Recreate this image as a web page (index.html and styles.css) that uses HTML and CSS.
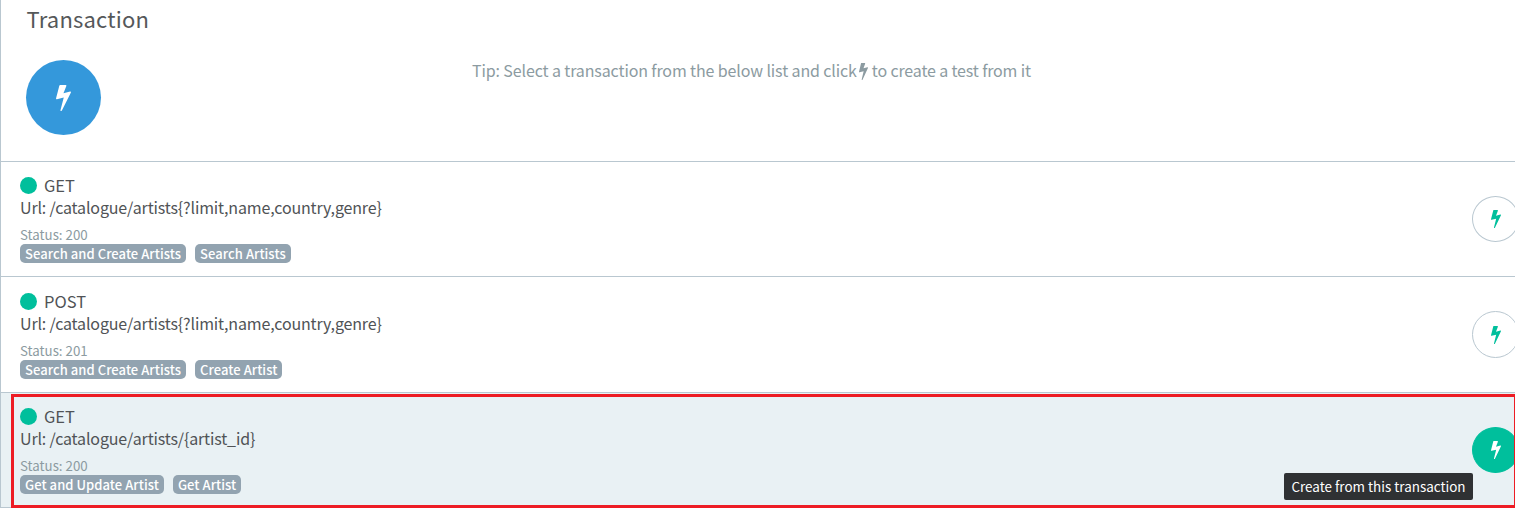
FILE: index.html
```html
<!DOCTYPE html>
<html lang="en">
<head>
<meta charset="utf-8">
<title>Transaction</title>
<link rel="stylesheet" href="styles.css">
</head>
<body>
<svg class="defs" aria-hidden="true"><symbol id="bolt" viewBox="0 124 896 1668" preserveAspectRatio="none"><path d="M885 566q18 20 7 44l-540 1157q-13 25-42 25-4 0-14-2-17-5-25.500-19t-4.500-30l197-808-406 101q-4 1-12 1-18 0-31-11-18-15-13-39l201-825q4-16 17-26t31-10h328q19 0 32 12.500t13 29.500q0 8-5 18l-171 463 396-98q8-2 12-2 19 0 34 15z"/></symbol></svg>
<main class="panel">
  <header class="head">
    <div class="intro">
      <h1 class="title">Transaction</h1>
      <button class="main-btn" aria-label="Create"><svg class="bolt-lg"><use href="#bolt"/></svg></button>
    </div>
    <p class="tip"><span class="tip-a">Tip: Select a transaction from the below list and click</span><svg class="bolt-tip"><use href="#bolt"/></svg><span class="tip-b">to create a test from it</span></p>
  </header>
  <section class="row">
    <div class="info">
      <div class="method"><i class="dot"></i><span>GET</span></div>
      <div class="url"><span>Url: /catalogue/artists{?limit,name,country,genre}</span></div>
      <div class="status"><span>Status: 200</span></div>
      <div class="tags"><span class="tag">Search and Create Artists</span><span class="tag">Search Artists</span></div>
    </div>
    <button class="run" aria-label="Create"><svg class="bolt-sm"><use href="#bolt"/></svg></button>
  </section>
  <section class="row post">
    <div class="info">
      <div class="method"><i class="dot"></i><span>POST</span></div>
      <div class="url"><span>Url: /catalogue/artists{?limit,name,country,genre}</span></div>
      <div class="status"><span>Status: 201</span></div>
      <div class="tags"><span class="tag">Search and Create Artists</span><span class="tag">Create Artist</span></div>
    </div>
    <button class="run" aria-label="Create"><svg class="bolt-sm"><use href="#bolt"/></svg></button>
  </section>
  <section class="row active">
    <div class="info">
      <div class="method"><i class="dot"></i><span>GET</span></div>
      <div class="url"><span>Url: /catalogue/artists/{artist_id}</span></div>
      <div class="status"><span>Status: 200</span></div>
      <div class="tags"><span class="tag">Get and Update Artist</span><span class="tag">Get Artist</span></div>
    </div>
    <button class="run" aria-label="Create"><svg class="bolt-sm"><use href="#bolt"/></svg></button>
    <div class="tooltip">Create from this transaction</div>
    <div class="outline"></div>
  </section>
</main>
</body>
</html>
```
FILE: styles.css
```css
* { box-sizing: border-box; }
body { margin: 0; background: #fff; color: #505356; font-family: "Noto Sans CJK SC", sans-serif; overflow: hidden; }
.defs { position: absolute; width: 0; height: 0; }
svg { fill: currentColor; display: block; flex: none; }
button { padding: 0; font: inherit; }
.panel { width: 1515px; height: 508px; border-left: 1px solid #b9c7d0; overflow: hidden; }
.head { display: flex; height: 162px; border-bottom: 1px solid #b9c7d0; }
.intro { width: 471px; padding: 2px 0 0 25px; }
.title { margin: 0 0 26px; font-size: 22px; line-height: 32px; font-weight: 400; color: #55585a; letter-spacing: 0.18px; padding-left: 0.5px; }
.main-btn { width: 75px; height: 75px; border: 0; border-radius: 50%; background: #3498db; color: #fff; display: flex; align-items: center; justify-content: center; }
.bolt-lg { width: 15px; height: 26px; }
.tip { display: flex; align-items: flex-start; margin: 58px 0 0; color: #8c9ba1; font-size: 16px; line-height: 24px; letter-spacing: -0.12px; white-space: nowrap; }
.bolt-tip { width: 9px; height: 17px; margin: 5px 4px 0 2px; }
.tip-b { letter-spacing: -0.15px; }
.row { position: relative; display: flex; justify-content: space-between; height: 115px; border-bottom: 1px solid #b9c7d0; padding-left: 19px; }
.post { height: 116px; }
.info { padding-top: 12px; white-space: nowrap; }
.post .info { padding-top: 13px; }
.method { display: flex; align-items: center; height: 22px; font-size: 16.500px; gap: 7px; }
.dot { width: 17px; height: 17px; border-radius: 50%; background: #00bf9c; }
.url { font-size: 16px; height: 22px; line-height: 22px; letter-spacing: -0.15px; }
.status { font-size: 13.300px; line-height: 20px; color: #8c9ba1; margin-top: 7px; height: 19px; }
.tags { display: flex; gap: 9px; }
.tag { height: 19px; line-height: 19px; padding: 0 5px; border-radius: 5px; background: #92a3b0; color: #fff; font-size: 13px; font-weight: 500; letter-spacing: 0.05px; }
.run { flex: none; width: 47px; height: 46px; margin: 34px -4px 0 0; border: 1px solid #b9c7d0; border-radius: 50%; background: #fff; color: #00bf9c; display: flex; align-items: center; justify-content: center; }
.post .run { height: 47px; }
.bolt-sm { width: 10px; height: 18px; }
.active { background: #e9f1f4; }
.active .run { background: #00bf9c; border-color: #00bf9c; color: #fff; }
.tooltip { position: absolute; left: 1283px; top: 80px; width: 189px; height: 27px; border-radius: 2px; background: #2f3133; color: #fff; font-size: 13.450px; line-height: 27px; text-align: center; white-space: nowrap; }
.outline { position: absolute; left: 10px; top: 1px; right: 0; height: 114px; border: 3px solid #ed1c24; border-right-width: 1px; }
```
